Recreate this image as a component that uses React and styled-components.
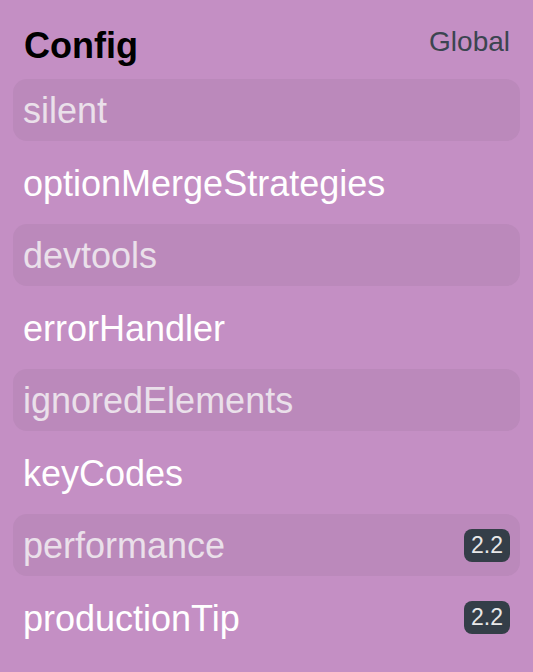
import React from 'react'
import styled, { createGlobalStyle } from 'styled-components'

const GlobalStyle = createGlobalStyle`
  html, body {
    margin: 0;
    padding: 0;
    background: #c48fc4;
  }
  body {
    font-family: "Liberation Sans", Arial, Helvetica, sans-serif;
  }
`

const Panel = styled.div`
  width: 533px;
  height: 672px;
  box-sizing: border-box;
  padding: 28px 13px 0;
  background: #c48fc4;
  overflow: hidden;
`

const Header = styled.header`
  display: flex;
  justify-content: space-between;
  align-items: flex-start;
  height: 51px;
  padding: 0 10px 0 11px;
`

const Title = styled.h1`
  margin: 0;
  font-size: 36px;
  line-height: 1;
  font-weight: 700;
  color: #000;
`

const Scope = styled.span`
  font-size: 28px;
  line-height: 1;
  color: #3b4550;
`

const List = styled.ul`
  list-style: none;
  margin: 0;
  padding: 0;
  display: flex;
  flex-direction: column;
  gap: 10.5px;
`

const Row = styled.li`
  display: flex;
  align-items: center;
  justify-content: space-between;
  box-sizing: border-box;
  height: 62px;
  padding: 2px 10px 0;
  border-radius: 14px;
  font-size: 36px;
  background: ${p => (p.$muted ? '#bb89bb' : 'transparent')};
  color: ${p => (p.$muted ? '#eae0ea' : '#ffffff')};
`

const Badge = styled.span`
  display: inline-flex;
  align-items: center;
  justify-content: center;
  height: 33px;
  margin-top: -2px;
  padding: 0 7px;
  border-radius: 8px;
  background: #343e48;
  color: #e8e8e8;
  font-size: 23px;
`

const options = [
  { name: 'silent' },
  { name: 'optionMergeStrategies' },
  { name: 'devtools' },
  { name: 'errorHandler' },
  { name: 'ignoredElements' },
  { name: 'keyCodes' },
  { name: 'performance', since: '2.2' },
  { name: 'productionTip', since: '2.2' },
]

export default function App() {
  return (
    <Panel>
      <GlobalStyle />
      <Header>
        <Title>Config</Title>
        <Scope>Global</Scope>
      </Header>
      <List>
        {options.map((o, i) => (
          <Row key={o.name} $muted={i % 2 === 0}>
            <span>{o.name}</span>
            {o.since && <Badge>{o.since}</Badge>}
          </Row>
        ))}
      </List>
    </Panel>
  )
}
